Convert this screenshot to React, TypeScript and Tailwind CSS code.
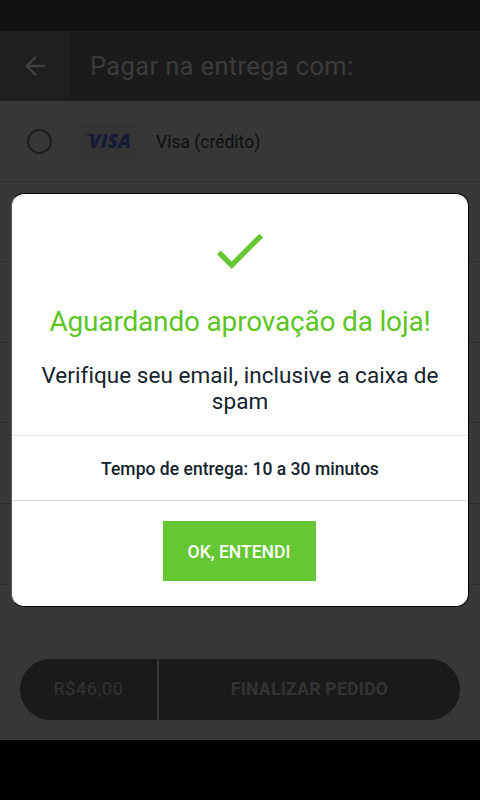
import type { ReactNode } from "react";

function ArrowBack() {
  return (
    <svg viewBox="0 0 24 24" className="w-[30px] h-[30px] fill-[#3f3f3f]">
      <path d="M20 11H7.83l5.59-5.59L12 4l-8 8 8 8 1.41-1.41L7.83 13H20v-2z" />
    </svg>
  );
}

function CheckMark() {
  return (
    <svg viewBox="0 0 24 24" className="w-[63px] h-[63px] mr-[2px] fill-[#65c733]">
      <path d="M9 16.17L4.83 12l-1.42 1.41L9 19 21 7l-1.41-1.41z" />
    </svg>
  );
}

function VisaLogo() {
  return (
    <div className="w-14 h-[37px] rounded bg-[#343435]">
      <svg viewBox="0 0 56 37" className="w-14 h-[37px] fill-[#161a35]">
        <path d="M6 11.3h6.5l2 6.2c-1.8-3.2-4.6-5.1-8.5-5.7z" />
        <text x="9" y="25.3" fontSize="19.5" textLength="42" lengthAdjust="spacingAndGlyphs"
          className="font-['Open_Sans',sans-serif] font-extrabold italic">VISA</text>
      </svg>
    </div>
  );
}

function PaymentRow({ children }: { children?: ReactNode }) {
  return (
    <div className="flex items-center h-[80.6px] shrink-0 border-b border-[#2d2d2d] pl-[27px] pt-[2px]">{children}</div>
  );
}

function ApprovalDialog() {
  return (
    <div className="absolute inset-x-0 top-[193px] flex justify-center">
      <div className="flex flex-col w-[458px] h-[414px] rounded-[13px] border border-black border-l-[#555555] bg-white overflow-hidden text-center text-[#14232d]">
        <div className="flex flex-col items-center h-[242px] border-b border-[#e4e4e4] pt-[25px]">
          <CheckMark />
          <h2 className="mt-[22px] text-[28px] leading-9 tracking-[-0.18px] whitespace-nowrap text-[#5cc51f]">
            Aguardando aprovação da loja!
          </h2>
          <p className="mt-[22px] text-[22.5px] leading-[26px] tracking-[0.05px] whitespace-nowrap">
            Verifique seu email, inclusive a caixa de<br />spam
          </p>
        </div>
        <div className="flex items-center justify-center h-[65px] border-b border-[#d9d9d9] pt-[2px] text-[17.5px] font-medium">
          <span className="whitespace-nowrap tracking-[0.03px]">Tempo de entrega: 10 a 30 minutos</span>
        </div>
        <div className="flex justify-center pt-5 pr-[2px]">
          <button className="w-[153px] h-[59.5px] pt-[2px] bg-[#65c733] text-white text-[17.5px] font-medium whitespace-nowrap">
            OK, ENTENDI
          </button>
        </div>
      </div>
    </div>
  );
}

export default function App() {
  return (
    <div className="relative flex flex-col w-[480px] h-[800px] overflow-hidden bg-black font-[Roboto,sans-serif]">
      <div className="h-[31px] shrink-0 bg-[#111111]" />
      <header className="flex h-[70px] shrink-0 bg-[#1b1b1b]">
        <div className="flex items-center justify-center w-[70px] bg-[#1e1e1e]">
          <ArrowBack />
        </div>
        <h1 className="pl-[20px] text-[25.5px] leading-[70px] tracking-[0.36px] whitespace-nowrap text-[#3b3b3b]">
          Pagar na entrega com:
        </h1>
      </header>

      <main className="flex flex-col h-[639px] shrink-0 bg-[#373737]">
        <PaymentRow>
          <span className="w-[25px] h-[25px] rounded-full border-2 border-[#1d1d1d]" />
          <div className="ml-7">
            <VisaLogo />
          </div>
          <span className="ml-5 text-[17.5px] whitespace-nowrap text-[#0b1010]">Visa (crédito)</span>
        </PaymentRow>
        <PaymentRow />
        <PaymentRow />
        <PaymentRow />
        <PaymentRow />
        <PaymentRow />
        <div className="flex mt-auto mx-5 mb-5 h-[61px] shrink-0 rounded-full overflow-hidden bg-[#1a1a1a] text-[#333333]">
          <div className="flex items-center justify-center w-[139px] border-r-2 border-[#373737] pb-[2px] text-[18px] tracking-[0.7px]">
            R$46,00
          </div>
          <div className="flex flex-1 items-center justify-center text-[17.5px] font-bold tracking-[0.3px]">
            FINALIZAR PEDIDO
          </div>
        </div>
      </main>

      <ApprovalDialog />
    </div>
  );
}
